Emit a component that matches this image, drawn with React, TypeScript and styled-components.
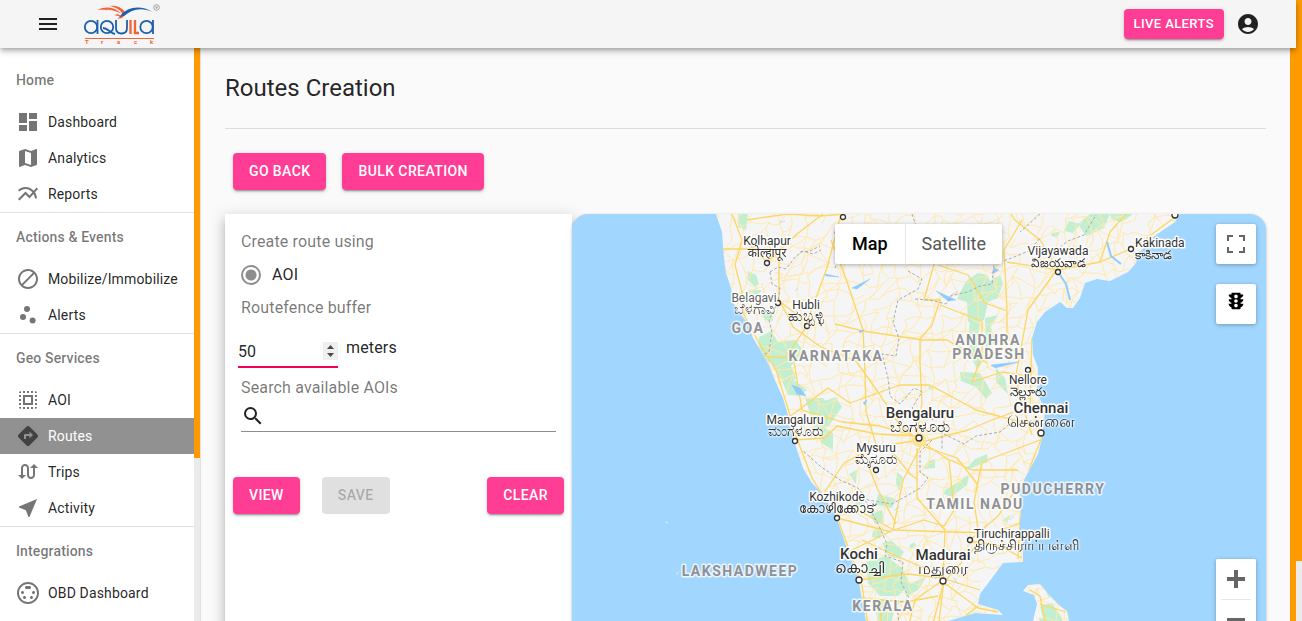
import React from 'react';
import styled, { createGlobalStyle, css } from 'styled-components';
import {
  MdMenu, MdDashboard, MdMap, MdMultilineChart, MdDoNotDisturbAlt, MdScatterPlot, MdSelectAll,
  MdDirections, MdSwapCalls, MdNearMe, MdSettingsInputSvideo, MdAccountCircle, MdTraffic, MdSearch,
} from 'react-icons/md';
import type { IconType } from 'react-icons';

const pink = '#ff3d94';
const orange = '#ff9b00';
const ink = 'rgba(0, 0, 0, 0.87)';
const muted = 'rgba(0, 0, 0, 0.54)';

const Global = createGlobalStyle`
  *, *::before, *::after { box-sizing: border-box; }
  body {
    margin: 0;
    background: #fafafa;
    color: ${ink};
    font-family: Roboto, "Noto Sans", sans-serif;
    font-size: 16px;
    line-height: 24px;
  }
  button, input { font-family: inherit; }
`;

const Shell = styled.div`
  display: flex;
  height: 100vh;
  overflow: hidden;
`;

const Page = styled.div`
  flex: 1;
  min-width: 0;
  display: flex;
  flex-direction: column;
`;

const ScrollTrack = styled.div<{ $filled: string }>`
  flex: none;
  width: 6px;
  background: linear-gradient(${orange} ${p => p.$filled}, #ebebeb ${p => p.$filled});
`;

const TopBar = styled.header`
  position: relative;
  z-index: 2;
  flex: none;
  display: flex;
  align-items: center;
  height: 48px;
  padding: 0 36px;
  background: #f5f5f5;
  box-shadow: 0 2px 4px -1px rgba(0, 0, 0, 0.2), 0 4px 5px rgba(0, 0, 0, 0.14), 0 1px 10px rgba(0, 0, 0, 0.12);
`;

const IconButton = styled.button`
  display: flex;
  padding: 0;
  border: 0;
  background: none;
  color: #212121;
  font-size: 24px;
  cursor: pointer;
`;

const Brand = styled.a`
  display: flex;
  margin-left: 20px;
  margin-right: auto;
`;

const Button = styled.button<{ $small?: boolean }>`
  padding: 6px 16px;
  border: 0;
  border-radius: 4px;
  background: ${pink};
  color: #fff;
  font-size: 14px;
  font-weight: 500;
  line-height: 25px;
  letter-spacing: 0.4px;
  text-transform: uppercase;
  cursor: pointer;
  box-shadow: 0 3px 1px -2px rgba(0, 0, 0, 0.2), 0 2px 2px rgba(0, 0, 0, 0.14), 0 1px 5px rgba(0, 0, 0, 0.12);
  ${p => p.$small && css`
    margin-right: 12px;
    padding: 4px 10px;
    font-size: 13px;
    line-height: 22px;
  `}
  &:disabled {
    background: #e0e0e0;
    color: rgba(0, 0, 0, 0.26);
    box-shadow: none;
    cursor: default;
  }
`;

const Body = styled.div`
  flex: 1;
  min-height: 0;
  display: flex;
`;

const Sidebar = styled.aside`
  flex: none;
  display: flex;
  width: 201px;
  background: #fff;
  border-right: 1px solid #e0e0e0;
`;

const SideNav = styled.nav`
  flex: 1;
  overflow: hidden;
  padding-top: 8px;
`;

const NavGroup = styled.section`
  & + & { border-top: 1px solid #e0e0e0; }
`;

const NavHeading = styled.h2`
  margin: 0;
  padding: 0 16px;
  color: ${muted};
  font-size: 14px;
  font-weight: 500;
  line-height: 48px;
  letter-spacing: 0.15px;
`;

const NavLink = styled.a<{ $active?: boolean }>`
  display: flex;
  align-items: center;
  gap: 8px;
  height: 36px;
  padding: 0 16px;
  background: ${p => (p.$active ? '#919191' : 'transparent')};
  color: ${p => (p.$active ? '#fff' : ink)};
  font-size: 14px;
  letter-spacing: 0.15px;
  text-decoration: none;
  white-space: nowrap;
  svg {
    flex: none;
    font-size: 24px;
    color: ${p => (p.$active ? '#424242' : '#757575')};
  }
`;

const Main = styled.main`
  flex: 1;
  min-width: 0;
  overflow: hidden;
  padding: 24px;
`;

const Title = styled.h1`
  margin: 0;
  padding-bottom: 24px;
  border-bottom: 1px solid #dcdcdc;
  font-size: 24px;
  font-weight: 400;
  line-height: 32px;
`;

const Actions = styled.div`
  display: flex;
  gap: 16px;
  padding: 24px 8px;
`;

const Workspace = styled.div`
  display: grid;
  grid-template-columns: 1fr 2fr;
`;

const Panel = styled.form`
  padding: 16px 8px;
  background: #fff;
  letter-spacing: 0.15px;
  box-shadow: 0 5px 5px -3px rgba(0, 0, 0, 0.2), 0 8px 10px 1px rgba(0, 0, 0, 0.14), 0 3px 14px 2px rgba(0, 0, 0, 0.12);
`;

const FieldLabel = styled.label`
  display: block;
  padding: 0 8px;
  color: ${muted};
`;

const RadioLabel = styled.label`
  display: flex;
  align-items: center;
  gap: 11px;
  height: 42px;
  padding: 0 8px;
`;

const Radio = styled.input`
  appearance: none;
  width: 20px;
  height: 20px;
  margin: 0;
  border: 2px solid #8e8e8e;
  border-radius: 50%;
  background: radial-gradient(circle, #8e8e8e 5px, transparent 6px);
`;

const BufferRow = styled.div`
  display: flex;
  align-items: flex-start;
  gap: 8px;
  height: 56px;
  padding: 16px 5px 0;
`;

const BufferInput = styled.input`
  width: 100px;
  height: 32px;
  padding: 0;
  border: 0;
  border-bottom: 2px solid #f50057;
  outline: 0;
  background: none;
  color: ${ink};
  font-size: 16px;
  &::-webkit-inner-spin-button {
    appearance: none;
    width: 15px;
    height: 18px;
    opacity: 1;
    background: #efefef url("data:image/svg+xml,%3Csvg xmlns='http://www.w3.org/2000/svg' width='15' height='18'%3E%3Cpath d='M4 7l3.500-4L11 7zM4 11l3.500 4L11 11z' fill='%234a4a4a'/%3E%3C/svg%3E");
  }
`;

const SearchBox = styled.div`
  display: flex;
  align-items: center;
  height: 32px;
  margin: 0 8px;
  border-bottom: 1px solid #8e8e8e;
  svg { flex: none; font-size: 24px; }
`;

const SearchInput = styled.input`
  flex: 1;
  min-width: 0;
  border: 0;
  outline: 0;
  background: none;
  font-size: 16px;
`;

const FormActions = styled.div`
  display: flex;
  gap: 22px;
  padding-top: 45px;
  ${Button}:last-child { margin-left: auto; }
`;

const MapFrame = styled.section`
  position: relative;
  height: 450px;
  overflow: hidden;
  border-radius: 16px;
  background: #a1d7ff;
  box-shadow: 0 1px 3px rgba(0, 0, 0, 0.3);
`;

const MapDrawing = styled.svg`
  display: block;
  width: 100%;
  height: 100%;
  font-family: Roboto, "Noto Sans", sans-serif;
`;

const MapTypes = styled.div`
  position: absolute;
  top: 10px;
  left: 50%;
  display: flex;
  margin-left: -84px;
  border-radius: 2px;
  background: #fff;
  box-shadow: 0 1px 4px rgba(0, 0, 0, 0.3);
`;

const MapType = styled.button<{ $on?: boolean }>`
  height: 40px;
  padding: 0 17px;
  border: 0;
  background: none;
  color: ${p => (p.$on ? '#000' : '#565656')};
  font-size: 18px;
  line-height: 38px;
  font-weight: ${p => (p.$on ? 500 : 400)};
  & + & {
    padding: 0 16px;
    border-left: 1px solid #e6e6e6;
  }
`;

const MapTools = styled.div<{ $bottom?: boolean }>`
  position: absolute;
  right: 10px;
  ${p => (p.$bottom ? 'bottom: 24px;' : 'top: 10px;')}
  display: flex;
  flex-direction: column;
  gap: ${p => (p.$bottom ? '0' : '20px')};
  ${p => p.$bottom && css`
    background: #fff;
    border-radius: 2px;
    box-shadow: 0 1px 4px rgba(0, 0, 0, 0.3);
  `}
`;

const MapTool = styled.button<{ $raised?: boolean }>`
  display: flex;
  align-items: center;
  justify-content: center;
  width: 40px;
  height: 40px;
  padding: 0;
  border: 0;
  border-radius: 2px;
  background: #fff;
  color: ${p => (p.$raised ? '#000' : '#666')};
  box-shadow: ${p => (p.$raised ? '0 1px 4px rgba(0, 0, 0, 0.3)' : 'none')};
`;

const TrafficTool = styled(MapTool)`
  align-items: flex-start;
  padding-top: 6px;
  font-size: 22px;
`;

const ZoomRule = styled.hr`
  width: 30px;
  height: 1px;
  margin: 0 auto;
  border: 0;
  background: #e6e6e6;
`;

type NavItem = { label: string; icon: IconType; active?: boolean };
const groups: { heading: string; items: NavItem[] }[] = [
  { heading: 'Home', items: [
    { label: 'Dashboard', icon: MdDashboard },
    { label: 'Analytics', icon: MdMap },
    { label: 'Reports', icon: MdMultilineChart },
  ] },
  { heading: 'Actions & Events', items: [
    { label: 'Mobilize/Immobilize', icon: MdDoNotDisturbAlt },
    { label: 'Alerts', icon: MdScatterPlot },
  ] },
  { heading: 'Geo Services', items: [
    { label: 'AOI', icon: MdSelectAll },
    { label: 'Routes', icon: MdDirections, active: true },
    { label: 'Trips', icon: MdSwapCalls },
    { label: 'Activity', icon: MdNearMe },
  ] },
  { heading: 'Integrations', items: [{ label: 'OBD Dashboard', icon: MdSettingsInputSvideo }] },
];

const Logo = () => (
  <svg width="80" height="48" viewBox="80 0 80 48" role="img" aria-label="Aquila Track">
    <path d="M97 10c8-4 16-3 21 1l4 3c-6-3-12-5-17-4 7 0 12 3 17 7l-8-2 4-1c-5-3-11-5-21-4z" fill="#f4623a" />
    <path d="M110 6c7-1 12 2 15 6l5-2-8 8-5 1c3-2 5-4 5-6-3-4-7-6-12-7z" fill="#f4623a" />
    <path d="M121 15c6-7 18-11 32-3-12-5-21-3-29 4l-5 1z" fill="#1c5fab" />
    <circle cx="156.500" cy="7.500" r="2.800" fill="none" stroke="#8c8c8c" strokeWidth=".8" />
    <path d="M155 7h3M156.500 7v2" stroke="#8c8c8c" strokeWidth=".7" />
    <g fill="none" stroke="#1c5fab" strokeWidth="1.800">
      <circle cx="91" cy="27" r="6.200" /><path d="M97.500 20v14" />
      <circle cx="107" cy="27" r="6.200" /><path d="M103 28c5 0 7 5 12 6" />
      <path d="M116 20v8q0 5.500 5.500 5.500T127 28v-8" />
      <circle cx="146.500" cy="27" r="6.200" /><path d="M153 20v14" />
    </g>
    <path d="M130.500 20v14M135 20v13h4" fill="none" stroke="#f4623a" strokeWidth="2.300" />
    <path d="M85 38.500h69" stroke="#f4623a" strokeWidth="1.200" />
    <text x="85 101 117 134 150" y="44" fill="#f4623a" fontSize="6" fontWeight="700" fontFamily="Roboto, sans-serif">Track</text>
  </svg>
);

const mainland = 'M716 214L722 232 724 258 726 273 731 288 735 308 747 322 753 338 762 353 769 365 774 378 783 398 788 415 793 438 803 468 812 483 823 494 837 518 840 528 848 551 858 578 863 604 866 621 885 664H915L925 645 948 621 975 613 1003 615 998 610 978 604 980 594 995 574 1003 563 1023 562V539L1019 531 1021 511 1020 489 1025 478 1038 454 1042 438 1045 411 1037 392 1038 368 1033 355 1032 338 1037 322 1045 312 1060 302 1067 308H1073L1080 298 1085 283 1097 279 1110 281 1128 272 1136 263 1137 255 1153 237 1175 222 1180 214Z';
const island = 'M1023 591L1028 585 1040 584 1050 596 1060 606 1067 611 1069 621 1084 664H1024L1033 621 1037 604 1034 595Z';

const forests = [
  'M738 214h10l-2 16-8-3zM748 271l8 4 3 9-4 3-8-8zM748 290h14l-4 5-9-1z',
  'M759 337l12-6 7 11 18-2 8 12-13 14 5 12-7 8-10-9-8-14-12-5z',
  'M781 379l14 2 12 9-7 6-12-1zM805 398l18 0 12 15-5 12-15 5zM820 425l13 8v17l-12-7z',
  'M763 314l9-1 1 8-9-1z',
  'M966 281l12-8 9 2 3 6 10-6 3 8-5 15-10 4-4 18-16 2-1-20-10-3z',
  'M970 316l11 2-4 25 8 16-8 10-9-18zM985 318l13-3-8 12 7 14-11 8z',
  'M960 372l20 1 12 20-6 6-10-12-15-6zM996 368l9 10 3 16-12-12z',
  'M1090 214l20 0-6 14-18 8-8-12zM1069 221l11 3-7 9-9-2zM1110 214h23l-11 8-10-2zM1052 233l8-1-3 5-6-1z',
  'M930 385l4 1-1 5-5-3zM813 405l23-8 6 10-10 14-17 4z',
  'M927 462l8-3v9l-12 1zM966 469l9-10 12-5 1 8-12 4-8 4zM945 490l24-15-2 10-16 12-7-3z',
  'M897 472l6 5-4 14-3-8zM878 494l18 5-4 9-16-3zM870 514l12-4 2 12-9 2zM873 531l10-3-3 10-8-1z',
  'M849 474l8-4-1 14zM853 494l9 1 2 8-8 3z',
  'M866 562l20-6 16 12 8 16-12 12-18 0-12-13zM875 602l12-4 7 14-4 16-12-2zM905 586l14-6 8-4-9 14-12 7z',
  'M882 543l10-2 12 11-5 7-11-3zM909 546l5-4 2 3-5 4zM1003 520l7-5-3 8z',
  'M1040 606l12-3 10 15 1 20h-15zM1046 592l6 4-3 2z',
  'M1038 618l8 1-4 5z',
];

const lakes = [
  'M825 274l14 3-13-1zM852 288l18-9-13 10zM936 291l20 9-8 1zM950 296l8-5M994 268l5 2-7 4zM859 331l5-1-4 3zM991 365l28-3-24 6zM863 403l4-3-2 5zM780 222l5-1M792 385l8 3 6 8-9-2zM894 510l6-3M953 577l5 7M1009 520l5-4M795 291l3-3',
];

const highways = [
  'M732 214L742 240 735 265 742 292 744 315 760 345 776 370 786 402 796 436 812 478 838 520 850 552 862 585 868 625',
  'M722 249h25l20-6 12 18 0 38 14 28 28 20 35 14 22 31 20 30 27 25 32 11 21 27',
  'M747 220l40-6 34 2 22-2M779 301l28 21 20-54 14-54M807 326l-22 32-25-2',
  'M831 240l12 30 20 60 2 42 1 40 10 32 18 10 16 20 8 6',
  'M938 250l-14 50 16 0-8 25-12 14v24l2 40-6 36',
  'M940 305l42 16v34l-10 27 30-10 26 4M938 265l30 10 17 28 22 8 0 30-22 20',
  'M1007 310l-3-60 18-30M1058 268l-30 42-12 65 4 24 12 36',
  'M1007 262l51 8 42-8 35-15 40-30M1058 270l24-7M1032 338l-2 68-38 14-24 10-46 12',
  'M792 350l10 60 40 12 38 4 42 12',
  'M835 324l28 7 60 9 24 0 40 23M788 418l40-30 22 15 50-18 30 0 46 25 56 15',
  'M795 440l30-2 12-12 40 8 42 2M824 493l20-30 30-16 40-6',
  'M919 440l30 20 5 50-10 16-20-6-30 10-40-22',
  'M1042 437l-12 30-10 50-2 42M1040 440l-58 22-8 40 6 40-36 40-12 45',
  'M950 460l22 10 46 0M893 530l60 2 40 1 28-10M848 552l45-22 10-50 20-38',
  'M858 580l50-6 34 4 38 12M943 580l-28 20-10 40M943 582l35 26 20 4',
  'M943 578l2-48-28-32 0-50M970 540l28-24 20-30M970 541l30 5 22 12M862 598l44 4 32-6M862 540l30 14 50 22',
  'M868 465l10 25 18 34M837 518l54 14M1030 590l10 6 4 20 10 40M1040 604l26 8M1058 270l-18-30-25-20-4-6',
  'M858 575l8 89M880 600l4 64M944 580l-6 50-30 34M978 606l-20 16-22 24',
  'M1100 262l10-30 16-18M767 262l30-28 26-20M767 262l-20-20',
];

const borders = 'M800 252l10-1 10-5M770 272l8-5 8 2 9-12 8-6 10 3 8-4M770 272l2 12 8 4-2 14-9 18 3 12-3 20-6 3M835 268l5-12-6-26M912 214l4 12-8 8 6 12M908 271l14 8-4 10-20 11-5 22 6 16-3 18-14-2 6 24 2 18 10 8 14-16 8 4-10 16 20 12 14-8-4 18 0 20M915 299l15 1 16 4 6-9 16-3 12-6 12-2 2-20 15-5 20-8 12-14M932 440l-12 12 0 20 8 6-8 10-10 6-18 10-24-4-10-12-18-8-20-14-18-16M944 434l20 10 12-8 24-4 14-12M865 500l14 26 8 18-2 12 18 6-2 20 8 16-12 6 2 20M1060 247l8-6 16-6 12-20M1040 214l-20 18';

const seeded = (seed: number) => () => {
  seed = (seed * 16807) % 2147483647;
  return seed / 2147483647;
};

/* Minor roads: a loose mesh of bent links between jittered grid points. */
const minorRoads = (() => {
  const rand = seeded(4217);
  const step = 12;
  const cols = 42;
  const rows = 38;
  const pts = Array.from({ length: rows }, (_, r) =>
    Array.from({ length: cols }, (_, c) => [
      Math.round(705 + c * step + (rand() - 0.5) * 13),
      Math.round(210 + r * step + (rand() - 0.5) * 13),
    ]));
  let d = '';
  const link = (a: number[], b: number[]) => {
    const mx = Math.round((a[0] + b[0]) / 2 + (rand() - 0.5) * 6);
    const my = Math.round((a[1] + b[1]) / 2 + (rand() - 0.5) * 6);
    d += `M${a[0]} ${a[1]}L${mx} ${my} ${b[0]} ${b[1]}`;
  };
  for (let r = 0; r < rows - 1; r += 1) {
    for (let c = 1; c < cols - 1; c += 1) {
      if (rand() < 0.75) link(pts[r][c], pts[r][c + 1]);
      if (rand() < 0.75) link(pts[r][c], pts[r + 1][c]);
      if (rand() < 0.25) link(pts[r][c], pts[r + 1][c - 1]);
    }
  }
  return d;
})();

type City = {
  name: string; local: string; x: number; y: number; dot: [number, number];
  localSize?: number; major?: boolean; start?: boolean; soft?: boolean;
};
const cities: City[] = [
  { name: 'Kolhapur', local: 'कोल्हापूर', x: 767, y: 245, dot: [767, 263] },
  { name: 'Belagavi', local: 'ಬೆಳಗಾವಿ', x: 754, y: 302, dot: [778, 303], soft: true, localSize: 14 },
  { name: 'Hubli', local: 'ಹುಬ್ಬಳ್ಳಿ', x: 806, y: 309, dot: [807, 326], localSize: 15 },
  { name: 'Vijayawada', local: 'విజయవాడ', x: 1058, y: 255, dot: [1058, 272] },
  { name: 'Kakinada', local: 'కాకినాడ', x: 1135, y: 247, dot: [1131, 249], start: true },
  { name: 'Nellore', local: 'నెల్లూరు', x: 1028, y: 384, dot: [1028, 370] },
  { name: 'Chennai', local: 'சென்னை', x: 1041, y: 413, dot: [1041, 433], major: true, localSize: 16 },
  { name: 'Bengaluru', local: 'ಬೆಂಗಳೂರು', x: 920, y: 418, dot: [919, 438], major: true, localSize: 16 },
  { name: 'Mangaluru', local: 'ಮಂಗಳೂರು', x: 795, y: 424, dot: [795, 441], localSize: 14 },
  { name: 'Mysuru', local: 'ಮೈಸೂರು', x: 876, y: 452, dot: [876, 470], localSize: 14 },
  { name: 'Kozhikode', local: 'കോഴിക്കോട്', x: 837, y: 501, dot: [837, 518], localSize: 13 },
  { name: 'Kochi', local: 'കൊച്ചി', x: 859, y: 559, dot: [859, 580], major: true, localSize: 15 },
  { name: 'Madurai', local: 'மதுரை', x: 943, y: 560, dot: [943, 581], major: true, localSize: 16 },
  { name: 'Tiruchirappalli', local: 'திருச்சிராப்பள்ளி', x: 974, y: 538, dot: [970, 540], start: true, localSize: 14 },
];

const regions: [string, number, number][] = [
  ['GOA', 748, 333], ['KARNATAKA', 836, 361], ['ANDHRA', 988, 345], ['PRADESH', 989, 359],
  ['PUDUCHERRY', 1053, 494], ['TAMIL NADU', 975, 509], ['LAKSHADWEEP', 740, 576], ['KERALA', 883, 611],
];

const RegionText = styled.text`
  fill: #8f9196;
  font-size: 14px;
  font-weight: 700;
  letter-spacing: 1.5px;
  text-anchor: middle;
  stroke: rgba(255, 255, 255, 0.75);
  stroke-width: 3px;
  stroke-linejoin: round;
  paint-order: stroke;
`;

const CityText = styled.text<{ $size: number; $bold?: boolean; $start?: boolean; $soft?: boolean }>`
  fill: ${p => (p.$soft ? '#616161' : '#333')};
  font-size: ${p => p.$size}px;
  font-weight: ${p => (p.$bold ? 500 : 400)};
  text-anchor: ${p => (p.$start ? 'start' : 'middle')};
  stroke: #fff;
  stroke-width: 3px;
  stroke-linejoin: round;
  paint-order: stroke;
`;

/* Joined scripts take a halo behind the whole word, so that no glyph's outline covers its neighbour. */
const LocalText = styled(CityText)`
  stroke: none;
  filter: drop-shadow(0 0 1px #fff) drop-shadow(0 0 1px #fff);
`;

const MapCanvas = () => (
  <MapDrawing viewBox="572 214 694 450" preserveAspectRatio="xMidYMin slice" role="img" aria-label="Map of southern India">
    <defs>
      <clipPath id="land"><path d={mainland} /><path d={island} /></clipPath>
    </defs>
    <path d={mainland} fill="#f5f5f5" />
    <path d={island} fill="#f5f5f5" />
    <path d="M665 521l3 1-1 2zM676 574l4-4-3 5z" fill="#d6ecf8" />
    <g clipPath="url(#land)" fill="none" strokeLinejoin="round">
      {forests.map(d => <path key={d} d={d} fill="#c3efd0" />)}
      <path d={minorRoads} stroke="#fee9b0" strokeWidth="1" />
      {highways.map(d => <path key={d} d={d} stroke="#fdd663" strokeWidth="1.300" />)}
      {lakes.map(d => <path key={d} d={d} fill="#90caff" stroke="#90caff" strokeWidth=".5" />)}
      <path d="M1107 242l4 14 10 8M1058 272l8 12 4 16" stroke="#90caff" strokeWidth="2" />
      <path d={borders} stroke="#a9abb0" strokeDasharray="3 2" />
      <circle cx="919" cy="440" r="7" fill="#fde293" />
    </g>
    {regions.map(([name, x, y]) => <RegionText key={name} x={x} y={y}>{name}</RegionText>)}
    {cities.map(c => (
      <g key={c.name}>
        <circle cx={c.dot[0]} cy={c.dot[1]} r={c.major ? 3 : 2.5} fill="#fff" stroke="#333" strokeWidth="1.300" />
        <CityText x={c.x} y={c.y} $size={c.major ? 15 : 12} $bold={c.major} $start={c.start} $soft={c.soft}>{c.name}</CityText>
        <LocalText x={c.x} y={c.y + (c.major ? 14 : 12)} $size={c.localSize ?? 12} $start={c.start} $soft={c.soft}>{c.local}</LocalText>
      </g>
    ))}
    <circle cx="843" cy="217" r="2.500" fill="#fff" stroke="#333" strokeWidth="1.300" />
    <circle cx="1175" cy="215" r="3" fill="#fff" stroke="#333" strokeWidth="1.300" />
  </MapDrawing>
);

export default function App() {
  return (
    <>
      <Global />
      <Shell>
        <Page>
          <TopBar>
            <IconButton aria-label="Menu"><MdMenu /></IconButton>
            <Brand href="#"><Logo /></Brand>
            <Button type="button" $small>Live Alerts</Button>
            <IconButton aria-label="Account"><MdAccountCircle /></IconButton>
          </TopBar>
          <Body>
            <Sidebar>
              <SideNav>
                {groups.map(g => (
                  <NavGroup key={g.heading}>
                    <NavHeading>{g.heading}</NavHeading>
                    {g.items.map(({ label, icon: Icon, active }) => (
                      <NavLink key={label} href="#" $active={active}><Icon />{label}</NavLink>
                    ))}
                  </NavGroup>
                ))}
              </SideNav>
              <ScrollTrack $filled="410px" />
            </Sidebar>
            <Main>
              <Title>Routes Creation</Title>
              <Actions>
                <Button type="button">Go back</Button>
                <Button type="button">Bulk creation</Button>
              </Actions>
              <Workspace>
                <Panel onSubmit={e => e.preventDefault()}>
                  <FieldLabel as="div">Create route using</FieldLabel>
                  <RadioLabel><Radio type="radio" name="using" defaultChecked />AOI</RadioLabel>
                  <FieldLabel htmlFor="buffer">Routefence buffer</FieldLabel>
                  <BufferRow>
                    <BufferInput id="buffer" type="number" defaultValue={50} />
                    <span>meters</span>
                  </BufferRow>
                  <FieldLabel htmlFor="search">Search available AOIs</FieldLabel>
                  <SearchBox><MdSearch /><SearchInput id="search" type="text" /></SearchBox>
                  <FormActions>
                    <Button type="button">View</Button>
                    <Button type="button" disabled>Save</Button>
                    <Button type="button">Clear</Button>
                  </FormActions>
                </Panel>
                <MapFrame>
                  <MapCanvas />
                  <MapTypes>
                    <MapType type="button" $on>Map</MapType>
                    <MapType type="button">Satellite</MapType>
                  </MapTypes>
                  <MapTools>
                    <MapTool type="button" $raised aria-label="Full screen">
                      <svg width="18" height="18" fill="none" stroke="#666" strokeWidth="2">
                        <path d="M1 6V1h5M12 1h5v5M17 12v5h-5M6 17H1v-5" />
                      </svg>
                    </MapTool>
                    <TrafficTool type="button" $raised aria-label="Traffic"><MdTraffic /></TrafficTool>
                  </MapTools>
                  <MapTools $bottom>
                    <MapTool type="button" aria-label="Zoom in">
                      <svg width="18" height="18"><path d="M7 0h4v7h7v4h-7v7H7v-7H0V7h7z" fill="#666" /></svg>
                    </MapTool>
                    <ZoomRule />
                    <MapTool type="button" aria-label="Zoom out">
                      <svg width="18" height="18"><path d="M0 7h18v4H0z" fill="#666" /></svg>
                    </MapTool>
                  </MapTools>
                </MapFrame>
              </Workspace>
            </Main>
            <ScrollTrack $filled="100%" />
          </Body>
        </Page>
        <ScrollTrack $filled="561px" />
      </Shell>
    </>
  );
}
